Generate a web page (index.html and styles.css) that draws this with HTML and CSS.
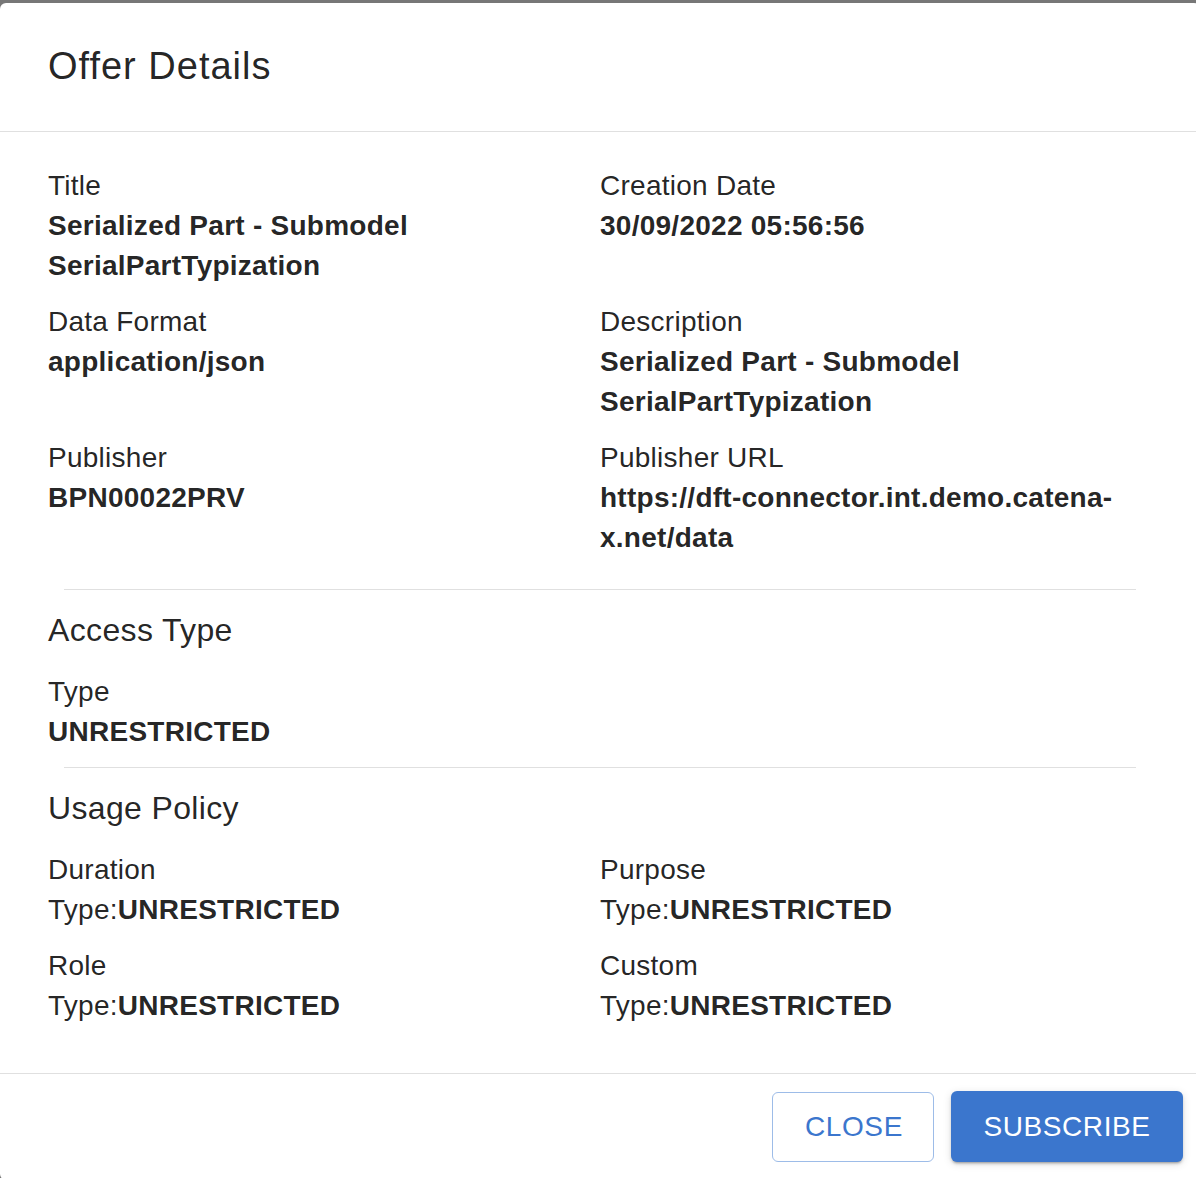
FILE: index.html
```html
<!DOCTYPE html>
<html lang="en">
<head>
<meta charset="utf-8">
<title>Offer Details</title>
<link rel="stylesheet" href="styles.css">
</head>
<body>
<div class="dialog">
  <header class="dialog-title">
    <h2>Offer Details</h2>
  </header>
  <div class="dialog-content">
    <div class="grid">
      <div class="field"><div class="label">Title</div><div class="value">Serialized Part - Submodel SerialPartTypization</div></div>
      <div class="field"><div class="label">Creation Date</div><div class="value">30/09/2022 05:56:56</div></div>
      <div class="field"><div class="label">Data Format</div><div class="value">application/json</div></div>
      <div class="field"><div class="label">Description</div><div class="value">Serialized Part - Submodel SerialPartTypization</div></div>
      <div class="field"><div class="label">Publisher</div><div class="value">BPN00022PRV</div></div>
      <div class="field"><div class="label">Publisher URL</div><div class="value">https://dft-connector.int.demo.catena-x.net/data</div></div>
    </div>
    <hr class="divider divider-first">
    <h3 class="section-title">Access Type</h3>
    <div class="grid section-grid">
      <div class="field"><div class="label">Type</div><div class="value">UNRESTRICTED</div></div>
    </div>
    <hr class="divider">
    <h3 class="section-title">Usage Policy</h3>
    <div class="grid section-grid">
      <div class="field"><div class="label">Duration</div><div class="policy">Type:<b>UNRESTRICTED</b></div></div>
      <div class="field"><div class="label">Purpose</div><div class="policy">Type:<b>UNRESTRICTED</b></div></div>
      <div class="field"><div class="label">Role</div><div class="policy">Type:<b>UNRESTRICTED</b></div></div>
      <div class="field"><div class="label">Custom</div><div class="policy">Type:<b>UNRESTRICTED</b></div></div>
    </div>
  </div>
  <footer class="dialog-actions">
    <button class="btn btn-outlined" type="button">Close</button>
    <button class="btn btn-contained" type="button">Subscribe</button>
  </footer>
</div>
</body>
</html>
```

FILE: styles.css
```css
html, body {
  margin: 0;
  padding: 0;
  height: 100%;
}
body {
  background: #777777;
  overflow: hidden;
  font-family: "Liberation Sans", Arial, Helvetica, sans-serif;
  color: rgba(0, 0, 0, 0.87);
}
.dialog {
  margin-top: 3px;
  width: 1200px;
  height: 1177px;
  background: #ffffff;
  border-radius: 6px;
  box-sizing: border-box;
  display: flex;
  flex-direction: column;
}
.dialog-title {
  height: 129px;
  box-sizing: border-box;
  padding: 0 48px 2px;
  display: flex;
  align-items: center;
  border-bottom: 1px solid #e0e0e0;
}
.dialog-title h2 {
  margin: 0;
  font-size: 38px;
  font-weight: 400;
  letter-spacing: 1px;
  line-height: 40px;
}
.dialog-content {
  padding: 34px 48px 47px;
}
.grid {
  display: grid;
  grid-template-columns: 552px 552px;
  row-gap: 16px;
}
.section-grid {
  margin-top: 22px;
}
.label,
.value,
.policy {
  font-size: 28px;
  line-height: 40px;
  letter-spacing: 0.26px;
}
.label {
  font-weight: 400;
}
.value {
  font-weight: 700;
  padding-right: 24px;
}
.policy {
  font-weight: 400;
}
.policy b {
  font-weight: 700;
}
.divider {
  margin: 15px 16px 0;
  border: 0;
  border-top: 1px solid #e0e0e0;
  height: 0;
}
.divider-first {
  margin-top: 31px;
}
.section-title {
  margin: 20px 0 0;
  font-size: 32px;
  font-weight: 400;
  letter-spacing: 0.35px;
  line-height: 40px;
}
.dialog-actions {
  border-top: 1px solid #e0e0e0;
  padding: 17px 17px 0 0;
  display: flex;
  align-items: flex-start;
  justify-content: flex-end;
  gap: 17px;
}
.btn {
  font-family: "Liberation Sans", Arial, Helvetica, sans-serif;
  font-size: 28px;
  letter-spacing: 0.6px;
  text-transform: uppercase;
  height: 71px;
  padding: 0 32px;
  border-radius: 6px;
  cursor: pointer;
  box-sizing: border-box;
}
.btn-outlined {
  background: #ffffff;
  color: #3b76cd;
  border: 1.5px solid #9dbce8;
  width: 162px;
  height: 70px;
  margin-top: 1px;
}
.btn-contained {
  background: #3b76cd;
  color: #ffffff;
  border: 0;
  width: 232px;
  box-shadow: 0 3px 2px -2px rgba(0, 0, 0, 0.2), 0 2px 3px 0 rgba(0, 0, 0, 0.14), 0 2px 8px 0 rgba(0, 0, 0, 0.12);
}
```
